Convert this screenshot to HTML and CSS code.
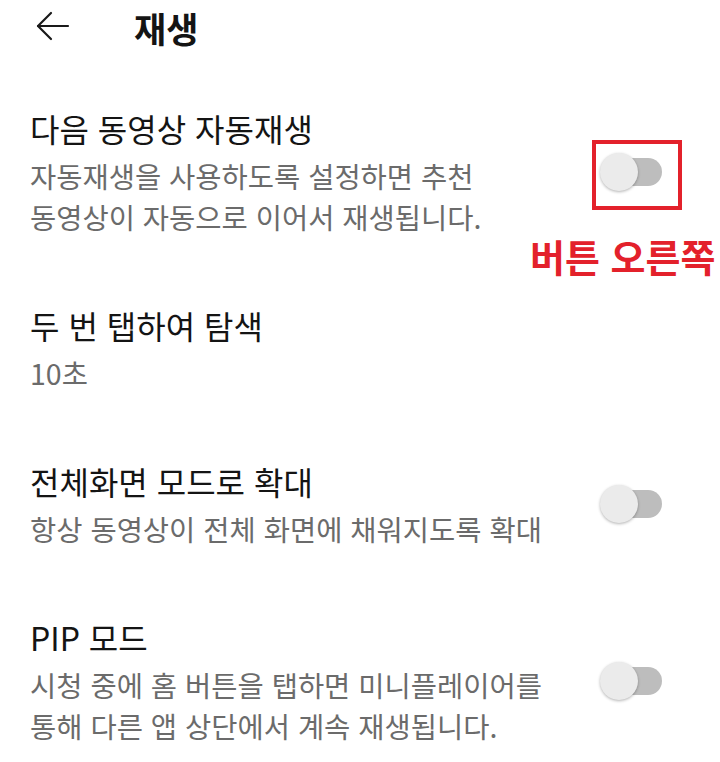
FILE: index.html
```html
<!DOCTYPE html>
<html lang="ko">
<head>
    <meta charset="UTF-8">
    <meta name="viewport" content="width=device-width, initial-scale=1.0">
    <title>재생</title>
    <link rel="stylesheet" href="styles.css">
</head>
<body>

    <div class="app-bar">
        <span class="back-btn">
            <svg width="34" height="30" viewBox="0 0 34 30" fill="none" stroke="#1a1a1a" stroke-width="2.2" stroke-linecap="round" stroke-linejoin="round">
                <path d="M32 15H2"/>
                <path d="M15 2L2 15l13 13"/>
            </svg>
        </span>
        <h1 class="app-title">재생</h1>
    </div>

    <div class="settings-list">
        <div class="setting">
            <div class="setting-text">
                <div class="setting-title">다음 동영상 자동재생</div>
                <div class="setting-desc">자동재생을 사용하도록 설정하면 추천 동영상이 자동으로 이어서 재생됩니다.</div>
            </div>
            <div class="switch-cell">
                <span class="switch"></span>
                <span class="mark-box"></span>
                <span class="mark-label">버튼 오른쪽</span>
            </div>
        </div>

        <div class="setting">
            <div class="setting-text">
                <div class="setting-title">두 번 탭하여 탐색</div>
                <div class="setting-desc">10초</div>
            </div>
        </div>

        <div class="setting">
            <div class="setting-text">
                <div class="setting-title">전체화면 모드로 확대</div>
                <div class="setting-desc">항상 동영상이 전체 화면에 채워지도록 확대</div>
            </div>
            <div class="switch-cell">
                <span class="switch"></span>
            </div>
        </div>

        <div class="setting">
            <div class="setting-text">
                <div class="setting-title">PIP 모드</div>
                <div class="setting-desc">시청 중에 홈 버튼을 탭하면 미니플레이어를 통해 다른 앱 상단에서 계속 재생됩니다.</div>
            </div>
            <div class="switch-cell">
                <span class="switch"></span>
            </div>
        </div>
    </div>

</body>
</html>
```

FILE: styles.css
```css
body {
    margin: 0;
    background-color: #fff;
    font-family: "Noto Sans CJK KR", "Noto Sans", sans-serif;
    color: #141414;
}
.app-bar {
    display: flex;
    align-items: center;
    height: 54px;
    padding-left: 36px;
}
.back-btn {
    display: flex;
    width: 34px;
    margin-top: -2px;
}
.app-title {
    margin: 0 0 0 64px;
    font-size: 35px;
    font-weight: bold;
    line-height: 1;
}
.settings-list {
    padding-top: 19px;
}
.setting {
    display: flex;
    align-items: center;
    padding: 33px 58px 33px 30px;
}
.setting-text {
    flex: 1;
    max-width: 525px;
    word-break: keep-all;
}
.setting-title {
    font-size: 32px;
    line-height: 44px;
    color: #141414;
}
.setting-desc {
    margin-top: 5px;
    font-size: 28.5px;
    line-height: 41px;
    color: #6b6b6b;
}
.switch-cell {
    position: relative;
    width: 62px;
    margin-left: auto;
}
.switch {
    position: relative;
    display: block;
    width: 54px;
    height: 28px;
    margin-left: 8px;
    border-radius: 14px;
    background-color: #bdbdbd;
}
.switch::before {
    content: "";
    position: absolute;
    left: -8px;
    top: -5px;
    width: 38px;
    height: 38px;
    border-radius: 50%;
    background-color: #ebebeb;
    box-shadow: 0 1px 3px rgba(0, 0, 0, 0.3);
}
.mark-box {
    position: absolute;
    left: -8px;
    top: -18px;
    width: 82px;
    height: 62px;
    border: 4px solid #e3212b;
}
.mark-label {
    position: absolute;
    left: -70px;
    top: 77px;
    white-space: nowrap;
    font-size: 38px;
    font-weight: bold;
    line-height: 1.1;
    color: #e3212b;
}
```
